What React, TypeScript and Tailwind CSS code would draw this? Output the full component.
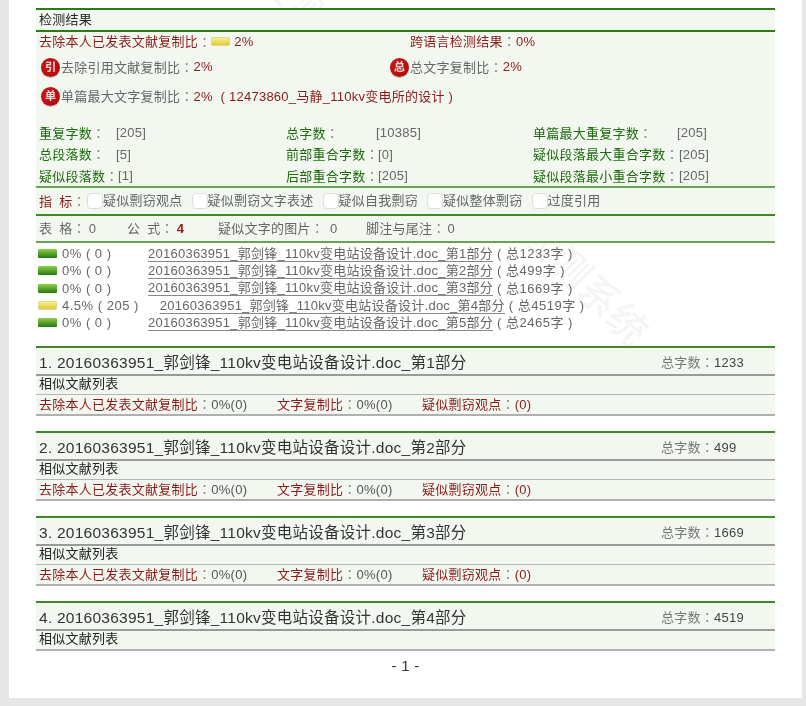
import React from "react";

const C = () => <span className="font-['Noto_Sans_CJK_TC',sans-serif] text-[#888] font-normal">：</span>;

function Badge({ ch }: { ch: string }) {
  return (
    <span className="w-[19px] h-[19px] mr-px shrink-0 rounded-full bg-[radial-gradient(circle_at_40%_40%,#d01818,#a80808)] shadow-[0_1px_1px_#bbb] text-[#f6dcdc] text-[11px] leading-[19px] text-center font-bold tracking-normal">
      {ch}
    </span>
  );
}

function Bar({ color }: { color: "green" | "yellow" }) {
  return (
    <span
      className={
        color === "green"
          ? "w-[19px] h-[9px] shrink-0 rounded-[1px] bg-gradient-to-b from-[#8fd048] to-[#1f7a10]"
          : "w-[19px] h-[9px] shrink-0 rounded-[1px] bg-gradient-to-b from-[#f6ee90] to-[#e0cc30] border border-[#e2da8a]"
      }
    />
  );
}

function Stat({ label, value, w }: { label: string; value: string; w: string }) {
  return (
    <div className="flex items-center h-[21.5px] whitespace-nowrap">
      <span className={`text-[#1f6b10] shrink-0 ${w}`}>
        {label}
        <C />
      </span>
      <span className="text-[#666]">{value}</span>
    </div>
  );
}

function Check({ label }: { label: string }) {
  return (
    <span className="flex items-center mr-[9px]">
      <span className="w-[16px] h-[16px] rounded-[4px] bg-white border border-[#ddd]" />
      <span className="text-[#666]">{label}</span>
    </span>
  );
}

const parts = [
  { n: 1, pct: "0% ( 0 )", total: "1233", c: "green" as const },
  { n: 2, pct: "0% ( 0 )", total: "499", c: "green" as const },
  { n: 3, pct: "0% ( 0 )", total: "1669", c: "green" as const },
  { n: 4, pct: "4.5% ( 205 )", total: "4519", c: "yellow" as const },
  { n: 5, pct: "0% ( 0 )", total: "2465", c: "green" as const },
];

const NAME = "20160363951_郭剑锋_110kv变电站设备设计.doc_第";

function Section({ n, total, full }: { n: number; total: string; full: boolean }) {
  return (
    <div className={full ? "mb-[15px]" : ""}>
      <div className="border-t-2 border-[#3f8a26] bg-[#f2f8ef] h-[28px] flex items-center justify-between pl-[3px] pt-[2px]">
        <span className="text-[15.5px] text-[#333]">
          {n}. {NAME}
          {n}部分
        </span>
        <span className="text-[#777] w-[114px]">
          总字数<C />
          <span className="text-[#444]">{total}</span>
        </span>
      </div>
      <div className="border-t-2 border-[#9a9a9a] bg-[#f2f8ef] h-[20px] flex items-center px-[3px] pb-[3px] text-[#222]">
        相似文献列表
      </div>
      {full && (
        <div className="border-t border-[#b5b5b5] bg-[#f2f8ef] h-[20px] flex items-center px-[3px] pb-[2px] text-[#8b1a1a]">
          <span className="w-[238px]">
            去除本人已发表文献复制比<C />
            <span className="text-[#555]">0%(0)</span>
          </span>
          <span className="w-[145px]">
            文字复制比<C />
            <span className="text-[#555]">0%(0)</span>
          </span>
          <span>
            疑似剽窃观点<C />
            (0)
          </span>
        </div>
      )}
      <div className="border-t-2 border-[#b0b0b0]" />
    </div>
  );
}

export default function App() {
  return (
    <div className="relative w-[806px] h-[706px] overflow-hidden bg-[#e6e6e6] font-['Liberation_Sans','Noto_Sans_CJK_SC',sans-serif] text-[13px] tracking-[0.25px]">
      <div className="relative ml-[9px] w-[793px] h-[698px] bg-white pt-[8px] pl-[27px] pr-[27px] blur-[0.3px]">
        <div
          aria-hidden
          className="absolute left-[495px] top-[262px] rotate-45 text-[40px] leading-none text-[#f4f4f4] whitespace-nowrap"
        >
          检测系统
        </div>
        <div
          aria-hidden
          className="absolute left-[245px] top-[-22px] rotate-45 text-[40px] leading-none text-[#f4f4f4] whitespace-nowrap"
        >
          检测
        </div>

        <div className="relative">
          <div className="bg-[#f2f8ef] border-t-2 border-[#2c7a12] h-[22px] flex items-center px-[3px] text-[#222]">
            检测结果
          </div>
          <div className="bg-[#f2f8ef] border-t-2 border-[#2c7a12] h-[156px] px-[3px]">
            <div className="flex items-center h-[19px] text-[#8b1a1a]">
              <span className="w-[371px] flex items-center">
                去除本人已发表文献复制比
                <C />
                <Bar color="yellow" />
                <span className="ml-[4px]">2%</span>
              </span>
              <span>
                跨语言检测结果<C />
                0%
              </span>
            </div>
            <div className="flex items-center h-[32px]">
              <span className="w-[351px] flex items-center pl-[2px]">
                <Badge ch="引" />
                <span className="text-[#666]">去除引用文献复制比<C /></span>
                <span className="text-[#8b1a1a]">2%</span>
              </span>
              <Badge ch="总" />
              <span className="text-[#666]">总文字复制比<C /></span>
              <span className="text-[#8b1a1a]">2%</span>
            </div>
            <div className="flex items-center h-[27px] pl-[2px]">
              <Badge ch="单" />
              <span className="text-[#666]">单篇最大文字复制比<C /></span>
              <span className="text-[#8b1a1a]">2%&nbsp; ( 12473860_马静_110kv变电所的设计 )</span>
            </div>
            <div className="grid grid-cols-[247px_247px_1fr] mt-[12px]">
              <div>
                <Stat label="重复字数" value="[205]" w="w-[77px]" />
                <Stat label="总段落数" value="[5]" w="w-[77px]" />
                <Stat label="疑似段落数" value="[1]" w="w-[79px]" />
              </div>
              <div>
                <Stat label="总字数" value="[10385]" w="w-[90px]" />
                <Stat label="前部重合字数" value="[0]" w="w-[92px]" />
                <Stat label="后部重合字数" value="[205]" w="w-[92px]" />
              </div>
              <div>
                <Stat label="单篇最大重复字数" value="[205]" w="w-[144px]" />
                <Stat label="疑似段落最大重合字数" value="[205]" w="w-[146px]" />
                <Stat label="疑似段落最小重合字数" value="[205]" w="w-[146px]" />
              </div>
            </div>
          </div>
          <div className="bg-[#f2f8ef] border-t-2 border-[#6aa05a] h-[28px] flex items-center px-[3px]">
            <span className="text-[#8b1a1a] w-[48px] whitespace-nowrap">
              指<span className="ml-[7px]">标</span>
              <C />
            </span>
            <Check label="疑似剽窃观点" />
            <Check label="疑似剽窃文字表述" />
            <Check label="疑似自我剽窃" />
            <Check label="疑似整体剽窃" />
            <Check label="过度引用" />
          </div>
          <div className="bg-[#f2f8ef] border-t-2 border-[#3f8a26] h-[27px] flex items-center px-[3px] text-[#666]">
            <span className="w-[88px] whitespace-nowrap">
              表<span className="ml-[7px]">格</span>
              <C />
              <span className="ml-[3px]">0</span>
            </span>
            <span className="w-[91px] whitespace-nowrap">
              公<span className="ml-[7px]">式</span>
              <C />
              <span className="ml-[3px] text-[#a01818] font-bold">4</span>
            </span>
            <span className="w-[148px]">
              疑似文字的图片<C />
              <span className="ml-[6px]">0</span>
            </span>
            <span>
              脚注与尾注<C />
              <span className="ml-[2px]">0</span>
            </span>
          </div>
          <div className="border-t-2 border-[#6aa05a] pt-[2px] pl-[2px]">
            {parts.map((p) => (
              <div key={p.n} className="flex items-center h-[17.3px] text-[#666]">
                <Bar color={p.c} />
                <span className="ml-[5px] min-w-[86px] pr-[21px] whitespace-nowrap tracking-[0.5px]">{p.pct}</span>
                <span className="border-b border-[#888] leading-[15px]">
                  {NAME}
                  {p.n}部分
                </span>
                <span className="ml-[4px] tracking-[0.5px]">( 总{p.total}字 )</span>
              </div>
            ))}
          </div>
          <div className="mt-[15px]">
            <Section n={1} total="1233" full />
            <Section n={2} total="499" full />
            <Section n={3} total="1669" full />
            <Section n={4} total="4519" full={false} />
          </div>
          <div className="text-center text-[15px] text-[#333] mt-[4px]">- 1 -</div>
        </div>
      </div>
    </div>
  );
}
